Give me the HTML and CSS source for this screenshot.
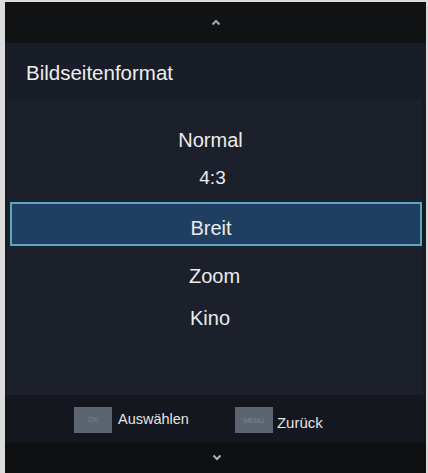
FILE: index.html
```html
<!DOCTYPE html>
<html lang="de">
<head>
<meta charset="utf-8">
<title>Bildseitenformat</title>
<link rel="stylesheet" href="styles.css">
</head>
<body>
<div class="screen">
  <div class="topbar">
    <svg class="chev" width="10" height="7" viewBox="0 0 10 7"><path d="M1.5 5.5 L5 2 L8.5 5.5" fill="none" stroke="#a6a8ab" stroke-width="2"/></svg>
  </div>
  <div class="title">Bildseitenformat</div>
  <div class="panel">
    <ul class="list">
      <li class="item item-normal">Normal</li>
      <li class="item item-43">4:3</li>
      <li class="item item-selected">Breit</li>
      <li class="item item-zoom">Zoom</li>
      <li class="item item-kino">Kino</li>
    </ul>
  </div>
  <div class="footer">
    <div class="hint hint-ok"><span class="key">OK</span><span class="label">Auswählen</span></div>
    <div class="hint hint-menu"><span class="key">MENU</span><span class="label label-low">Zurück</span></div>
  </div>
  <div class="bottombar">
    <svg class="chev" width="10" height="7" viewBox="0 0 10 7"><path d="M1.5 1.5 L5 5 L8.5 1.5" fill="none" stroke="#b0b2b5" stroke-width="2"/></svg>
  </div>
</div>
</body>
</html>
```
FILE: styles.css
```css
html, body {
  margin: 0;
  padding: 0;
  background: #dcdcdc;
}
body {
  padding: 2px 2px 0 5px;
  font-family: "Liberation Sans", Arial, sans-serif;
}
.screen {
  width: 421px;
  height: 471px;
  display: flex;
  flex-direction: column;
  background: #15181f;
  color: #ececec;
}
.topbar {
  height: 41px;
  background: #111214;
  display: flex;
  justify-content: center;
  align-items: center;
  padding-left: 1px;
  box-sizing: border-box;
}
.title {
  height: 57px;
  background: #191d27;
  font-size: 20.5px;
  line-height: 57px;
  padding-left: 21px;
  padding-top: 1px;
  box-sizing: border-box;
  color: #eeeeee;
}
.panel {
  height: 295px;
  background: #1b202b;
  box-sizing: border-box;
  border-left: 4px solid #191d26;
  border-right: 4px solid #171b23;
}
.list {
  list-style: none;
  margin: 0;
  padding: 21px 0 0;
  display: flex;
  flex-direction: column;
}
.item {
  height: 38px;
  line-height: 38px;
  text-align: center;
  font-size: 20px;
  padding-right: 10px;
  color: #ececec;
}
.item-43 { font-size: 19px; padding-right: 6px; }
.item-selected {
  margin: 5px 0 0 1px;
  height: 44px;
  line-height: 42px;
  padding-top: 3px;
  box-sizing: border-box;
  background: #203e60;
  border: 2px solid #5aa9c2;
  margin-right: 0;
  padding-right: 10px;
}
.item-zoom { margin-top: 11px; padding-right: 2px; }
.item-kino { margin-top: 4px; padding-right: 11px; }
.footer {
  height: 47px;
  background: #14171e;
  display: flex;
  align-items: center;
  padding-left: 69px;
  box-sizing: border-box;
}
.hint {
  display: flex;
  align-items: center;
}
.hint-menu { margin-left: 46px; }
.key {
  width: 38px;
  height: 26px;
  background: #5b6470;
  color: #7c8590;
  font-size: 7px;
  display: flex;
  align-items: center;
  justify-content: center;
  margin-right: 6px;
  margin-top: 2px;
}
.hint-menu .key { margin-right: 4px; margin-top: 3px; }
.label {
  font-size: 14.5px;
  color: #e4e4e4;
}
.label-low {
  font-size: 15px;
  margin-top: 8px;
}
.bottombar {
  flex: 1;
  background: #0f1012;
  display: flex;
  justify-content: center;
  align-items: center;
  padding-left: 3px;
}
```
